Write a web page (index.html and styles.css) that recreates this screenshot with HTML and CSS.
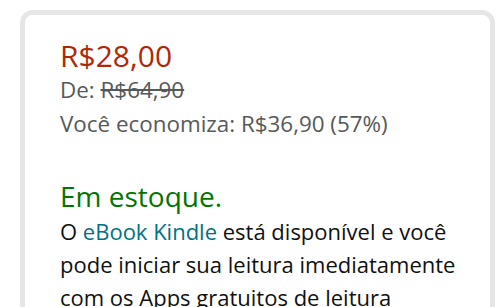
FILE: index.html
```html
<!DOCTYPE html>
<html lang="pt-BR">
<head>
    <meta charset="UTF-8">
    <meta name="viewport" content="width=device-width, initial-scale=1.0">
    <title>Comprar eBook Kindle</title>
    <link rel="stylesheet" href="styles.css">
</head>
<body>
    <div class="buy-box">
        <!-- preço -->
        <div class="price-block">
            <div class="price">R$28,00</div>
            <div class="list-price">De: <span class="strike">R$64,90</span></div>
            <div class="savings">Você economiza: R$36,90 (57%)</div>
        </div>

        <!-- disponibilidade -->
        <div class="availability">
            <div class="in-stock">Em estoque.</div>
            <p class="kindle-note">O <a href="#" class="link">eBook Kindle</a> está disponível e você pode iniciar sua leitura imediatamente com os Apps gratuitos de leitura</p>
        </div>
    </div>
</body>
</html>
```

FILE: styles.css
```css
* {
    margin: 0;
    padding: 0;
    box-sizing: border-box;
}

body {
    font-family: 'Open Sans', 'Noto Sans', sans-serif;
    background: white;
    padding: 10px 5px 0 20px;
    overflow: hidden;
    height: 307px;
}

.buy-box {
    width: 475px;
    height: 320px;
    overflow: hidden;
    border: 5px solid #e6e6e6;
    border-radius: 13px;
    padding: 24px 28px 0 35px;
    color: #0f1111;
}

.price {
    color: #b12704;
    font-size: 30px;
    line-height: 34px;
}

.list-price,
.savings {
    color: #565959;
    font-size: 22.4px;
    line-height: 34px;
}

.strike {
    text-decoration: line-through;
}

.availability {
    margin-top: 37px;
}

.in-stock {
    color: #007600;
    font-size: 28px;
    line-height: 37px;
}

.kindle-note {
    font-size: 22px;
    line-height: 33px;
}

.link {
    color: #007185;
    text-decoration: none;
}
```
